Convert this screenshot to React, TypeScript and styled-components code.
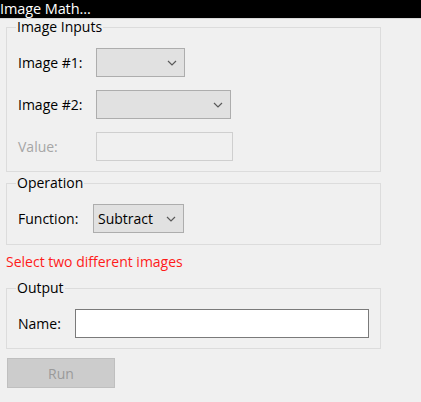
import React from "react";
import styled, { createGlobalStyle } from "styled-components";

const Global = createGlobalStyle`
  html, body { margin: 0; padding: 0; background: #f0f0f0; }
  body { font-family: "Open Sans", "Noto Sans", sans-serif; font-size: 14px; color: #000; }
`;

const Window = styled.div`
  width: 421px;
  height: 402px;
  background: #f0f0f0;
  display: flex;
  flex-direction: column;
  overflow: hidden;
`;

const TitleBar = styled.div`
  height: 18px;
  background: #000;
  color: #fff;
  font-size: 14.5px;
  line-height: 18px;
  letter-spacing: -0.1px;
  border-bottom: 1px solid #d8d8d8;
  white-space: nowrap;
`;

const Content = styled.div`
  padding: 0 0 0 6px;
  width: 375px;
  display: flex;
  flex-direction: column;
`;

const Group = styled.fieldset<{ $top?: number; $bottom?: number }>`
  margin: ${(p) => p.$top ?? 0}px 0 0 0;
  padding: 13px 11px ${(p) => p.$bottom ?? 10}px 11px;
  border: 1px solid #dcdcdc;
  display: flex;
  flex-direction: column;
  gap: 13px;
  min-width: 0;
`;

const Legend = styled.legend`
  padding: 0 1px;
  margin-left: -2px;
  font-size: 14px;
  line-height: 16px;
`;

const Row = styled.div`
  display: flex;
  align-items: center;
  height: 29px;
`;

const Label = styled.span<{ $w: number; $disabled?: boolean }>`
  width: ${(p) => p.$w}px;
  flex: none;
  color: ${(p) => (p.$disabled ? "#a6a6a6" : "#000")};
`;

const Combo = styled.div<{ $w: number }>`
  width: ${(p) => p.$w}px;
  height: 29px;
  box-sizing: border-box;
  background: #e1e1e1;
  border: 1px solid #adadad;
  display: flex;
  align-items: center;
  justify-content: space-between;
  padding: 0 7px 0 4px;
`;

const TextBox = styled.div<{ $w: number; $disabled?: boolean }>`
  width: ${(p) => p.$w}px;
  height: 29px;
  box-sizing: border-box;
  background: ${(p) => (p.$disabled ? "#f0f0f0" : "#fff")};
  border: 1px solid ${(p) => (p.$disabled ? "#cfcfcf" : "#7a7a7a")};
`;

const ErrorText = styled.div`
  color: #ff1a1a;
  line-height: 16px;
  margin-top: 9px;
`;

const RunButton = styled.div`
  margin-top: 9px;
  margin-left: 1px;
  width: 108px;
  height: 30px;
  box-sizing: border-box;
  background: #cccccc;
  border: 1px solid #bfbfbf;
  color: #9a9a9a;
  display: flex;
  align-items: center;
  justify-content: center;
`;

const Chevron = () => (
  <svg width="10" height="6" viewBox="0 0 10 6">
    <polyline points="1,1 5,5 9,1" fill="none" stroke="#5a5a5a" strokeWidth="1.2" />
  </svg>
);

export default function App() {
  return (
    <Window>
      <Global />
      <TitleBar>Image Math...</TitleBar>
      <Content>
        <Group $top={0}>
          <Legend>Image Inputs</Legend>
          <Row>
            <Label $w={78}>Image #1:</Label>
            <Combo $w={89}>
              <span />
              <Chevron />
            </Combo>
          </Row>
          <Row>
            <Label $w={78}>Image #2:</Label>
            <Combo $w={135}>
              <span />
              <Chevron />
            </Combo>
          </Row>
          <Row>
            <Label $w={78} $disabled>Value:</Label>
            <TextBox $w={137} $disabled />
          </Row>
        </Group>
        <Group $top={3} $bottom={11}>
          <Legend>Operation</Legend>
          <Row>
            <Label $w={75}>Function:</Label>
            <Combo $w={91}>
              <span>Subtract</span>
              <Chevron />
            </Combo>
          </Row>
        </Group>
        <ErrorText>Select two different images</ErrorText>
        <Group $top={10}>
          <Legend>Output</Legend>
          <Row>
            <Label $w={57}>Name:</Label>
            <TextBox $w={294} />
          </Row>
        </Group>
        <RunButton>Run</RunButton>
      </Content>
    </Window>
  );
}
